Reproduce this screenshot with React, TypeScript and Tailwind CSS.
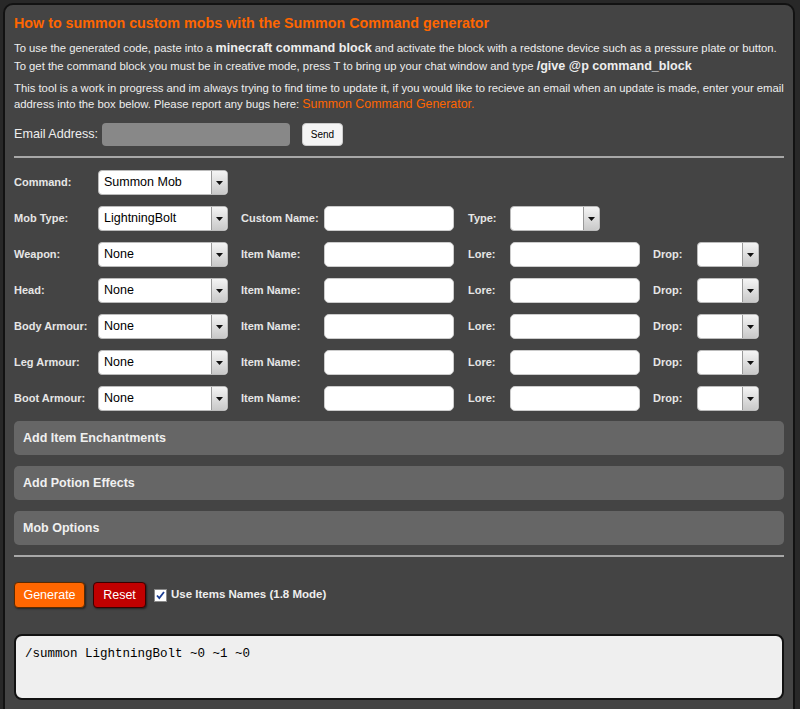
import React from 'react';

const gearRows = [
  { label: 'Weapon:' },
  { label: 'Head:' },
  { label: 'Body Armour:' },
  { label: 'Leg Armour:' },
  { label: 'Boot Armour:' },
];

const sections = ['Add Item Enchantments', 'Add Potion Effects', 'Mob Options'];

function Select({ value = '', width }: { value?: string; width: string }) {
  return (
    <div className={`${width} h-[25px] shrink-0 flex items-stretch bg-white rounded-[4px] border border-[#bbb] overflow-hidden`}>
      <div className="flex-1 flex items-center pl-[5px] text-[12.5px] text-black whitespace-nowrap">{value}</div>
      <div className="w-[16px] flex items-center justify-center border-l border-[#999] bg-gradient-to-b from-[#f4f4f4] to-[#c9c9c9]">
        <svg width="7" height="4" viewBox="0 0 7 4">
          <path d="M0 0h7L3.5 4z" fill="#111" />
        </svg>
      </div>
    </div>
  );
}

function TextBox({ width }: { width: string }) {
  return <div className={`${width} h-[25px] shrink-0 bg-white rounded-[5px] border border-[#ccc]`} />;
}

function Label({ children, width }: { children: React.ReactNode; width: string }) {
  return <div className={`${width} shrink-0 whitespace-nowrap text-[11px] font-bold text-[#e6e6e6]`}>{children}</div>;
}

export default function App() {
  return (
    <div className="min-h-screen bg-[#282828] pt-[3px] pl-[3px] pr-[5px] font-['Liberation_Sans',Arial,sans-serif]">
      <div className="bg-[#444444] border-2 border-[#121212] rounded-[10px] px-[9px] pt-[9px] pb-[20px] text-[#eeeeee]">
        <h1 className="text-[14.3px] font-bold text-[#ff6600] leading-[18px]">
          How to summon custom mobs with the Summon Command generator
        </h1>

        <p className="mt-[7px] text-[11.3px] leading-[18px] whitespace-nowrap">
          To use the generated code, paste into a <b className="text-[12.6px]">minecraft command block</b> and activate the block with a redstone device such as a pressure plate or button.
          <br />
          To get the command block you must be in creative mode, press T to bring up your chat window and type <b className="text-[12.6px]">/give @p command_block</b>
        </p>

        <p className="mt-[5px] text-[11.3px] leading-[16px]">
          This tool is a work in progress and im always trying to find time to update it, if you would like to recieve an email when an update is made, enter your email address into the box below. Please report any bugs here: <span className="text-[12.4px] leading-[14px] text-[#ff6600]">Summon Command Generator.</span>
        </p>

        <div className="mt-[11px] flex items-center">
          <span className="text-[12.6px] text-[#eeeeee]">Email Address:</span>
          <div className="ml-[4px] w-[188px] h-[23px] bg-[#888888] rounded-[4px]" />
          <button className="ml-[12px] h-[23px] w-[41px] bg-[#f4f4f4] text-black text-[10px] rounded-[4px] border border-[#ccc]">
            Send
          </button>
        </div>

        <div className="mt-[10px] h-[2px] bg-[#a8a8a8]" />

        <div className="mt-[12px] flex flex-col gap-[11px]">
          <div className="flex items-center">
            <Label width="w-[84px]">Command:</Label>
            <Select value="Summon Mob" width="w-[130px]" />
          </div>

          <div className="flex items-center">
            <Label width="w-[84px]">Mob Type:</Label>
            <Select value="LightningBolt" width="w-[130px]" />
            <div className="w-[13px]" />
            <Label width="w-[83px]">Custom Name:</Label>
            <TextBox width="w-[130px]" />
            <div className="w-[14px]" />
            <Label width="w-[42px]">Type:</Label>
            <Select width="w-[90px]" />
          </div>

          {gearRows.map((row) => (
            <div key={row.label} className="flex items-center">
              <Label width="w-[84px]">{row.label}</Label>
              <Select value="None" width="w-[130px]" />
              <div className="w-[13px]" />
              <Label width="w-[83px]">Item Name:</Label>
              <TextBox width="w-[130px]" />
              <div className="w-[14px]" />
              <Label width="w-[42px]">Lore:</Label>
              <TextBox width="w-[130px]" />
              <div className="w-[13px]" />
              <Label width="w-[44px]">Drop:</Label>
              <Select width="w-[62px]" />
            </div>
          ))}
        </div>

        <div className="mt-[10px] flex flex-col gap-[11px]">
          {sections.map((title) => (
            <div
              key={title}
              className="h-[34px] flex items-center px-[9px] bg-[#666666] rounded-[5px] text-[12.5px] font-bold text-[#f0f0f0]"
            >
              {title}
            </div>
          ))}
        </div>

        <div className="mt-[10px] h-[2px] bg-[#a8a8a8]" />

        <div className="mt-[25px] flex items-center">
          <button className="h-[26px] w-[71px] bg-[#ff6600] border border-[#5a2a00] rounded-[4px] text-[12.5px] text-white shadow-[1px_1px_2px_rgba(0,0,0,0.5)]">
            Generate
          </button>
          <button className="ml-[8px] h-[26px] w-[53px] bg-[#c00000] border border-[#3a0000] rounded-[4px] text-[12.5px] text-white shadow-[1px_1px_2px_rgba(0,0,0,0.5)]">
            Reset
          </button>
          <div className="ml-[8px] flex items-center gap-[4px] text-[11.5px] font-bold text-[#eeeeee]">
            <span className="w-[13px] h-[13px] flex items-center justify-center bg-white border border-[#8a8a8a]">
              <svg width="9" height="9" viewBox="0 0 9 9">
                <path d="M1 4.5l2.3 2.6L8 1" stroke="#1c3f95" strokeWidth="1.8" fill="none" />
              </svg>
            </span>
            Use Items Names (1.8 Mode)
          </div>
        </div>

        <div className="mt-[26px] h-[66px] bg-[#efefef] border-2 border-[#121212] rounded-[8px] px-[9px] pt-[9px] font-['Liberation_Mono','Courier_New',monospace] text-[12.5px] text-black">
          /summon LightningBolt ~0 ~1 ~0
        </div>
      </div>
    </div>
  );
}
